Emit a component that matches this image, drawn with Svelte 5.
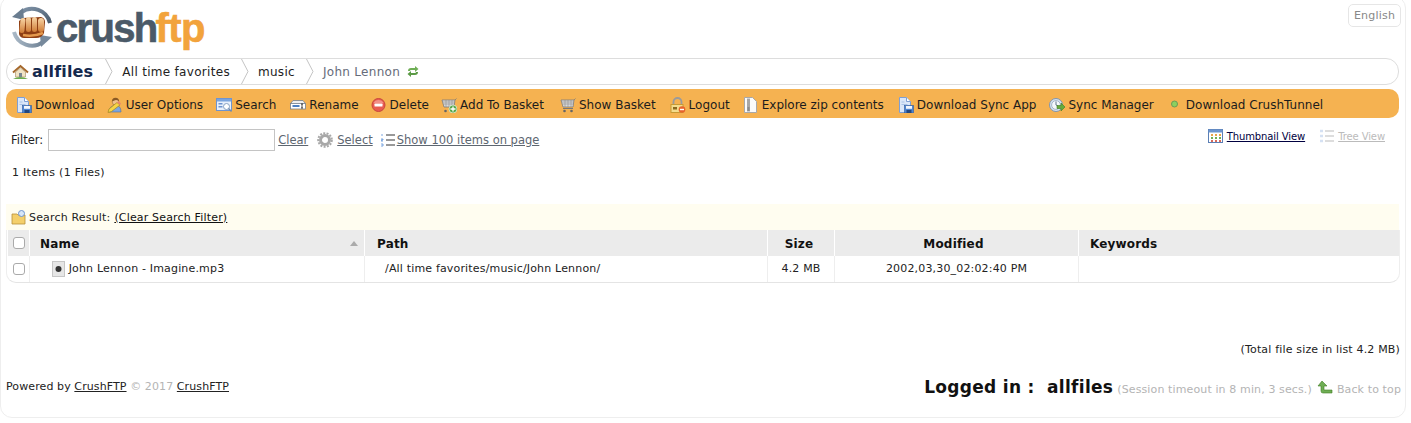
<script>
  const icons = {
    doc: `<path d="M1.500 .5h7l4 4v11h-11z" fill="#dbe7f8" stroke="#7f9fd3"/><path d="M8.500 .5v4h4" fill="#fff" stroke="#7f9fd3"/><path d="M3.500 5h3M3.500 7.500h6" stroke="#a9c2e6"/><rect x="6.500" y="8.500" width="9" height="7.500" fill="#4f86d1" stroke="#2f5b9e" stroke-width=".6"/><rect x="8" y="9" width="6" height="2.800" fill="#f4f7fc"/><rect x="8.500" y="13" width="5" height="3" fill="#24467e"/>`,
    user: `<path d="M2 15q0-6 6-6.500t6 6.500z" fill="#7ea6dd" stroke="#4b6fa5" stroke-width=".6"/><circle cx="8.500" cy="4.800" r="3.300" fill="#efc18c" stroke="#a06d38" stroke-width=".6"/><path d="M5 4.500Q5 .8 8.500 .8T12 4.500Q10 2.500 8 3.200T5 4.500z" fill="#8a5a24"/><path d="M1 15.500l1-3.500 8-6.500 3 2.500-8.500 6.500z" fill="#f6d445" stroke="#a5851c" stroke-width=".7"/><path d="M10 5.500l3 2.500 1-1.500-2.500-2.500z" fill="#e9866c"/>`,
    search: `<rect x=".5" y="1.500" width="15" height="12" fill="#e9f0fb" stroke="#6f94cf"/><rect x="1" y="2" width="14" height="2.500" fill="#7ba4dd"/><rect x="2.500" y="6" width="4" height="1.500" fill="#6f94cf"/><rect x="2.500" y="9" width="4" height="1.500" fill="#6f94cf"/><circle cx="10.500" cy="9.500" r="3" fill="#fff" stroke="#86a0c2"/><path d="M12.500 11.500l3 3" stroke="#6f8aaf" stroke-width="1.400"/>`,
    rename: `<path d="M3 3.500h10l2 2.500v1H1V6z" fill="#eeeeee" stroke="#77808c" stroke-width=".8"/><rect x=".5" y="6.500" width="15" height="5.500" fill="#fff" stroke="#77808c" stroke-width=".8"/><rect x="2.500" y="8" width="7" height="2" fill="#4b7fc2"/><path d="M12 7v4M11 7h2M11 11h2" stroke="#222" stroke-width=".8" fill="none"/>`,
    delete: `<circle cx="7.500" cy="8" r="6.500" fill="#e85b50" stroke="#c9463c"/><path d="M2.500 6a5.500 5 0 0110 0q-5 3-10 0z" fill="#f6a79f" opacity=".7"/><rect x="3.500" y="6.800" width="8" height="2.600" rx=".5" fill="#fff"/>`,
    cart: `<path d="M15.500 1.500l-1.500 1.500H1l2 7h10l1-7" fill="#d9d9d9" stroke="#7b7b7b" stroke-width=".8"/><path d="M2 5h12M2.500 7h11M5 3v7M8 3v7M11 3v7" stroke="#8f8f8f" stroke-width=".6"/><path d="M3 11.500h10" stroke="#777"/><circle cx="4.500" cy="14" r="1.300" fill="#666"/><circle cx="11.500" cy="14" r="1.300" fill="#666"/>`,
    cartAdd: `<path d="M15.500 1.500l-1.500 1.500H1l2 7h10l1-7" fill="#d9d9d9" stroke="#7b7b7b" stroke-width=".8"/><path d="M2 5h12M2.500 7h11M5 3v7M8 3v7M11 3v7" stroke="#8f8f8f" stroke-width=".6"/><circle cx="4.500" cy="14" r="1.300" fill="#666"/><circle cx="12" cy="12" r="4" fill="#58a84a" stroke="#fff" stroke-width=".6"/><path d="M12 9.500v5M9.500 12h5" stroke="#fff" stroke-width="1.300"/>`,
    lock: `<path d="M3.500 8V5a4 4 0 018 0v3" fill="none" stroke="#9b9b9b" stroke-width="1.800"/><rect x="1" y="7.500" width="12" height="8" fill="#f4dc8c" stroke="#c79a35"/><rect x="3" y="10" width="4" height="2.500" fill="#8b6a1f"/><circle cx="12" cy="12.500" r="3.300" fill="#e8642c"/><rect x="10" y="11.800" width="4" height="1.400" fill="#fff"/>`,
    zip: `<path d="M1.500 .5h8l4 4v11h-12z" fill="#fbfbfb" stroke="#a9a9a9"/><rect x="4" y="1" width="3" height="14" fill="#d2d2d2"/><path d="M4 3h3M4 5h3M4 7h3M4 9h3" stroke="#666" stroke-width=".8"/><rect x="4.200" y="10" width="2.600" height="4" fill="#8b8b8b"/>`,
    sync: `<circle cx="7" cy="8" r="6.500" fill="#d5e2f2" stroke="#8095ad"/><circle cx="7" cy="8" r="4.400" fill="#f5f8fc" stroke="#a5b6c9"/><path d="M7 4.500V8l2 1" stroke="#60748c" fill="none"/><path d="M8 8.500h4V6l4 4-4 4v-2.500H8z" fill="#66ab3c" stroke="#3f7d24" stroke-width=".6"/>`,
    dot: `<circle cx="6.500" cy="7" r="3" fill="#8cd05f" stroke="#6d9c54"/>`
  };

  // ml: space before the item, the original icons are not all the same width
  const tools = [
    { label: "Download", icon: "doc", ml: 0 },
    { label: "User Options", icon: "user", ml: 12 },
    { label: "Search", icon: "search", ml: 13 },
    { label: "Rename", icon: "rename", ml: 14 },
    { label: "Delete", icon: "delete", ml: 12 },
    { label: "Add To Basket", icon: "cartAdd", ml: 12 },
    { label: "Show Basket", icon: "cart", ml: 16 },
    { label: "Logout", icon: "lock", ml: 14 },
    { label: "Explore zip contents", icon: "zip", ml: 13 },
    { label: "Download Sync App", icon: "doc", ml: 14 },
    { label: "Sync Manager", icon: "sync", ml: 13 },
    { label: "Download CrushTunnel", icon: "dot", ml: 14, wide: true }
  ];
</script>

<div class="page">
  <header>
    <div class="logo">
      <svg width="44" height="44" viewBox="0 0 44 44">
        <defs>
          <linearGradient id="ring" x1="0" y1="0" x2="1" y2="1">
            <stop offset="0" stop-color="#7d91a6" />
            <stop offset="1" stop-color="#4a5b6c" />
          </linearGradient>
          <linearGradient id="ring2" x1="0" y1="0" x2="1" y2="0">
            <stop offset="0" stop-color="#a9b8c6" />
            <stop offset="1" stop-color="#6f8295" />
          </linearGradient>
          <linearGradient id="skin" x1="0" y1="0" x2="0" y2="1">
            <stop offset="0" stop-color="#f8d5a6" />
            <stop offset="1" stop-color="#d07c36" />
          </linearGradient>
        </defs>
        <path d="M39 17A18.500 18.500 0 0 0 10 6.500" fill="none" stroke="url(#ring)" stroke-width="4" />
        <path d="M3 26A18.500 18.500 0 0 0 32 36" fill="none" stroke="url(#ring2)" stroke-width="4" />
        <path d="M1 11l11-9 1 12z" fill="#6a7d90" />
        <path d="M41 31l-11 10-1-12z" fill="#76899c" />
        <path d="M8 15l4-3 18-1q4 1 4 5l-1 11q-2 5-8 5H13q-4 0-5-4z" fill="#8f3f14" />
        <rect x="9" y="12" width="5" height="15" rx="2.500" fill="url(#skin)" transform="rotate(6 11 19)" />
        <rect x="15" y="11" width="5" height="15" rx="2.500" fill="url(#skin)" />
        <rect x="21" y="11" width="5" height="15" rx="2.500" fill="url(#skin)" />
        <rect x="27" y="12" width="6" height="14" rx="3" fill="url(#skin)" />
        <path d="M12 29q10 2 20-2" stroke="#e59a4e" stroke-width="2.500" fill="none" />
      </svg>
      <span class="logo-text">crush<em>ftp</em></span>
    </div>
    <button class="lang">English</button>
  </header>

  <nav class="crumbs">
    <svg class="home" width="17" height="16" viewBox="0 0 17 16">
      <path d="M1 8.500L8.500 2 16 8.500" fill="none" stroke="#a5682c" stroke-width="2" />
      <path d="M3.500 8L8.500 4l5 4v5h-10z" fill="#f1e3c4" stroke="#a58a5c" stroke-width=".6" />
      <rect x="7" y="9" width="3" height="4" fill="#7a8790" />
      <path d="M1 15q7-4 15 0z" fill="#6dab4f" />
    </svg>
    <a class="root" href="#top">allfiles</a>
    <svg class="sep" width="8" height="25" viewBox="0 0 8 25"><path d="M.5 0L7 12.500.5 25" fill="none" stroke="#c4c4c4" /></svg>
    <a href="#top">All time favorites</a>
    <svg class="sep" width="8" height="25" viewBox="0 0 8 25"><path d="M.5 0L7 12.500.5 25" fill="none" stroke="#c4c4c4" /></svg>
    <a href="#top">music</a>
    <svg class="sep" width="8" height="25" viewBox="0 0 8 25"><path d="M.5 0L7 12.500.5 25" fill="none" stroke="#c4c4c4" /></svg>
    <span class="current">John Lennon</span>
    <svg class="refresh" width="12" height="13" viewBox="0 0 12 13">
      <path d="M1 6q0-3 3-3h4V1l3.500 3L8 7V5H4Q3 5 3 6z" fill="#6fae55" />
      <path d="M11 7q0 3-3 3H4v2L.5 9 4 6v2h4q1 0 1-1z" fill="#5b9a45" />
    </svg>
  </nav>

  <div class="toolbar">
    {#each tools as tool}
      <a class="tool" class:wide={tool.wide} href="#top" style="margin-left: {tool.ml}px">
        <svg width="16" height="16" viewBox="0 0 16 16">{@html icons[tool.icon]}</svg>
        {tool.label}
      </a>
    {/each}
  </div>

  <div class="filter-row">
    <label for="filter">Filter:</label>
    <input id="filter" type="text" />
    <a class="muted-link" href="#top">Clear</a>
    <svg class="gear" width="16" height="16" viewBox="0 0 16 16">
      <circle cx="8" cy="8" r="4.500" fill="none" stroke="#a8a8a8" stroke-width="3" />
      <circle cx="8" cy="8" r="6.800" fill="none" stroke="#a8a8a8" stroke-width="2" stroke-dasharray="2 1.340" />
    </svg>
    <a class="muted-link" href="#top">Select</a>
    <svg class="list" width="14" height="14" viewBox="0 0 14 14">
      <path d="M5 2h9M5 7h9M5 12h9" stroke="#333" />
      <path d="M1 1v2M0 6h2v1H0v1h2M0 11h2v2H0" stroke="#5b8fd6" fill="none" stroke-width=".8" />
    </svg>
    <a class="muted-link" href="#top">Show 100 items on page</a>
    <div class="views">
      <a class="view" href="#top">
        <svg width="15" height="14" viewBox="0 0 15 14">
          <rect x=".5" y=".5" width="14" height="13" fill="#fff" stroke="#5b7fb5" />
          <rect x=".5" y=".5" width="14" height="3" fill="#6d95cf" />
          <path d="M3 6h2M7 6h2M11 6h2" stroke="#e9a44a" stroke-width="2" />
          <path d="M3 9h2M7 9h2M11 9h2" stroke="#6fae55" stroke-width="2" />
          <path d="M3 12h2M7 12h2M11 12h2" stroke="#d86a5c" stroke-width="2" />
        </svg>
        <span>Thumbnail View</span>
      </a>
      <a class="view off" href="#top">
        <svg width="14" height="14" viewBox="0 0 14 14">
          <path d="M5 2h9M5 7h9M5 12h9" stroke="#bbb" />
          <path d="M0 2h3M0 7h3M0 12h3" stroke="#d5e1f3" stroke-width="2.500" />
        </svg>
        <span>Tree View</span>
      </a>
    </div>
  </div>

  <p class="count">1 Items (1 Files)</p>

  <div class="search-result">
    <svg width="16" height="15" viewBox="0 0 16 15">
      <path d="M1 4h5l1 1h7v9H1z" fill="#f4cf6b" stroke="#b8913a" stroke-width=".8" />
      <circle cx="10.500" cy="3.500" r="3" fill="#d7e6f8" stroke="#6f94cf" />
    </svg>
    <span>Search Result:</span>
    <a href="#top">(Clear Search Filter)</a>
  </div>

  <table>
    <thead>
      <tr>
        <th class="check"><input type="checkbox" /></th>
        <th class="name">Name<i class="sort"></i></th>
        <th class="path">Path</th>
        <th class="size">Size</th>
        <th class="modified">Modified</th>
        <th class="keywords">Keywords</th>
      </tr>
    </thead>
    <tbody>
      <tr>
        <td class="check"><input type="checkbox" /></td>
        <td class="file">
          <svg width="13" height="16" viewBox="0 0 13 16">
            <rect x=".5" y=".5" width="12" height="15" fill="#e6e6e6" stroke="#c6c6c6" />
            <circle cx="6.500" cy="8" r="3" fill="#333" />
          </svg>
          John Lennon - Imagine.mp3
        </td>
        <td class="file-path">/All time favorites/music/John Lennon/</td>
        <td class="center">4.2 MB</td>
        <td class="center">2002,03,30_02:02:40 PM</td>
        <td></td>
      </tr>
    </tbody>
  </table>

  <p class="total">(Total file size in list 4.2 MB)</p>

  <footer>
    <div class="powered">
      Powered by <a href="#top">CrushFTP</a> <span class="grey">© 2017</span> <a href="#top">CrushFTP</a>
    </div>
    <div class="session">
      <strong>Logged in :&nbsp; allfiles</strong>
      <span class="grey">(Session timeout in 8 min, 3 secs.)</span>
      <svg width="16" height="14" viewBox="0 0 16 14">
        <path d="M5 1L1 6h3v5q0 2 2 2h9v-3H7V6h3z" fill="#6fae55" stroke="#3f7d24" stroke-width=".6" />
      </svg>
      <a class="grey plain" href="#top">Back to top</a>
    </div>
  </footer>
</div>

<style>
  :global(body) {
    margin: 0;
    background: #fff;
    font-family: "DejaVu Sans", Verdana, sans-serif;
    font-size: 11px;
    letter-spacing: .17px;
    color: #222;
  }

  a { color: inherit; }

  .page {
    box-sizing: border-box;
    width: 1406px;
    height: 422px;
    margin-top: -4px;
    padding: 0 6px 0 5px;
    border: 1px solid #eee;
    border-radius: 12px;
    display: flex;
    flex-direction: column;
    overflow: hidden;
  }

  header {
    height: 61px;
    flex: none;
    display: flex;
    justify-content: space-between;
    align-items: flex-start;
  }

  .logo { display: flex; align-items: center; padding: 9px 0 0 5px; }
  .logo-text {
    font-family: "Liberation Sans", Arial, sans-serif;
    font-weight: bold;
    font-size: 40px;
    letter-spacing: -1.700px;
    -webkit-text-stroke: .6px #4b5a68;
    color: #4b5a68;
    margin-left: 1px;
    line-height: 44px;
  }
  .logo-text em {
    font-style: normal;
    color: #f2a33c;
    -webkit-text-stroke: .6px #f2a33c;
    letter-spacing: -.5px;
    margin-left: -1px;
  }

  .lang {
    margin: 7px -2px 0 0;
    padding: 0;
    width: 53px;
    height: 23px;
    font: 11px "DejaVu Sans", sans-serif;
    letter-spacing: .2px;
    color: #888;
    background: #fff;
    border: 1px solid #e6e6e6;
    border-radius: 5px;
  }

  .crumbs {
    box-sizing: border-box;
    height: 27px;
    flex: none;
    display: flex;
    align-items: center;
    padding-left: 5px;
    border: 1px solid #ddd;
    border-radius: 13px;
    font-size: 12px;
    letter-spacing: .3px;
  }
  .crumbs a { text-decoration: none; color: #222; }
  .crumbs .home { margin-right: 3px; }
  .crumbs .root { font-size: 16px; font-weight: bold; color: #15294d; letter-spacing: .15px; margin-right: 1px; }
  .sep { margin: 0 9px 0 11px; flex: none; }
  .current { color: #666b7a; }
  .refresh { margin-left: 7px; }

  .toolbar {
    box-sizing: border-box;
    margin-top: 4px;
    height: 29px;
    flex: none;
    display: flex;
    align-items: center;
    padding: 2px 0 0 10px;
    background: #f5b251;
    border-radius: 10px;
    font-size: 12px;
    letter-spacing: 0;
    white-space: nowrap;
  }
  .tool {
    display: flex;
    align-items: center;
    gap: 3px;
    text-decoration: none;
    color: #1c1c1c;
  }
  .tool.wide { gap: 2px; }

  .filter-row {
    height: 22px;
    flex: none;
    margin-top: 11px;
    padding-left: 5px;
    display: flex;
    align-items: center;
    font-size: 11.500px;
    letter-spacing: 0;
  }
  .filter-row label { margin-right: 5px; }
  .filter-row input {
    box-sizing: border-box;
    width: 227px;
    height: 22px;
    margin: 0 3px 0 0;
    border: 1px solid #c4c4c4;
  }
  .muted-link { color: #5d6670; }
  .gear { margin: 0 4px 0 9px; }
  .list { margin: 0 2px 0 8px; }
  .views {
    margin-left: auto;
    margin-right: 14px;
    margin-bottom: 8px;
    display: flex;
    gap: 15px;
    font-size: 10px;
    letter-spacing: -.1px;
  }
  .view { display: flex; align-items: center; gap: 4px; color: #000040; text-decoration: none; }
  .view span { text-decoration: underline; }
  .view.off { color: #bbb; }

  .count { margin: 15px 0 0 6px; line-height: 14px; flex: none; letter-spacing: .29px; }

  .search-result {
    box-sizing: border-box;
    margin-top: 24px;
    height: 26px;
    flex: none;
    display: flex;
    align-items: center;
    gap: 2px;
    padding-left: 5px;
    background: #fffdf0;
  }
  .search-result a { margin-left: 2px; color: #111; }

  table {
    width: 1394px;
    flex: none;
    table-layout: fixed;
    border-collapse: separate;
    border-spacing: 0;
    border-bottom: 1px solid #e4e4e4;
    border-left: 1px solid #eee;
    border-right: 1px solid #eee;
    border-radius: 0 0 10px 10px;
  }
  th {
    box-sizing: border-box;
    height: 26px;
    padding: 1px 0 0;
    background: #ebebeb;
    border-left: 1px solid #fff;
    font-size: 12px;
    text-align: left;
    color: #111;
  }
  td {
    height: 26px;
    padding: 0 0 1px;
    box-sizing: border-box;
    border-left: 1px solid #eee;
    font-size: 11px;
  }
  td:first-child { border-left: 0; }
  th.check, td.check { width: 22px; text-align: center; padding: 0 0 2px 1px; }
  th.name { width: 335px; padding-left: 10px; position: relative; }
  th.path { width: 403px; padding-left: 12px; }
  th.size { width: 67px; text-align: center; padding-right: 4px; }
  th.modified { width: 244px; text-align: center; padding-right: 6px; }
  th.keywords { padding-left: 11px; }
  input[type="checkbox"] {
    appearance: none;
    box-sizing: border-box;
    width: 12px;
    height: 12px;
    margin: 0;
    vertical-align: middle;
    background: #fff;
    border: 1px solid #aaa;
    border-radius: 3px;
  }
  .sort {
    position: absolute;
    right: 6px;
    top: 11px;
    border: 4px solid transparent;
    border-top: 0;
    border-bottom: 5px solid #aaa;
  }
  td.file { padding-left: 22px; }
  .file svg { vertical-align: middle; }
  td.file-path { padding-left: 20px; }
  .center { text-align: center; }

  .total {
    margin: 60px -1px 0 0;
    text-align: right;
    line-height: 14px;
    flex: none;
  }

  footer {
    margin-top: 17px;
    display: flex;
    justify-content: space-between;
    align-items: center;
    height: 24px;
    flex: none;
  }
  .powered { letter-spacing: .1px; }
  .grey { color: #b4b4b4; }
  .plain { text-decoration: none; }
  .session {
    display: flex;
    align-items: baseline;
    gap: 4px;
    margin: 2px -2px 0 0;
    letter-spacing: .12px;
  }
  .session strong { font-size: 17px; color: #111; letter-spacing: .3px; }
  .session svg { margin-left: 1px; align-self: center; }
</style>
